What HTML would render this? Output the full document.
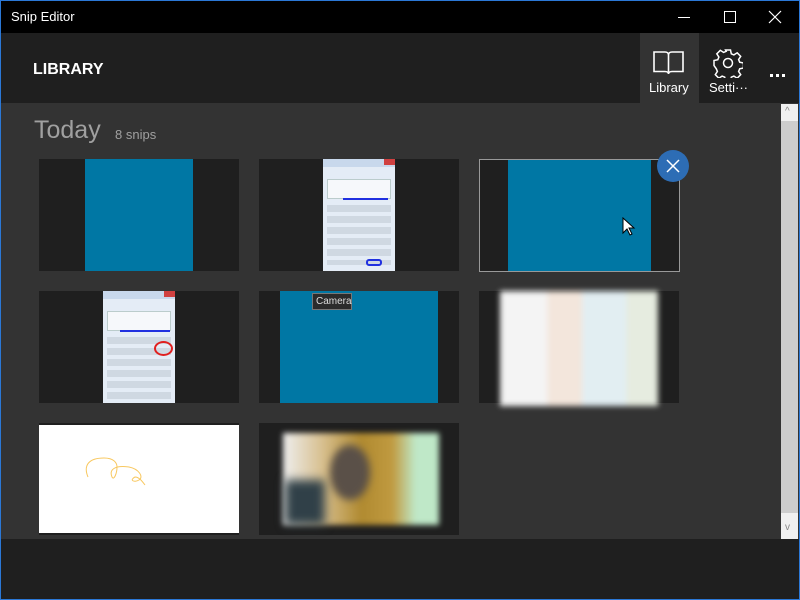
<!DOCTYPE html>
<html><head><meta charset="utf-8"><style>
*{margin:0;padding:0;box-sizing:border-box}
body{width:800px;height:600px;background:#333;position:relative;overflow:hidden;font-family:"Liberation Sans","Noto Sans CJK JP",sans-serif;color:#fff}
.a{position:absolute}
.tile{position:absolute;background:#1f1f1f}
.blue{position:absolute;background:#0077a4}
</style></head><body>
<div class="a" style="left:0;top:0;width:800px;height:600px;border:1px solid #2b78d6;z-index:50;pointer-events:none"></div>
<div class="a" style="left:0;top:0;width:800px;height:33px;background:#000"></div>
<div class="a" style="left:11px;top:9px;font-size:13px">Snip Editor</div>
<div class="a" style="left:678px;top:17px;width:12px;height:1px;background:#fff"></div>
<div class="a" style="left:724px;top:11px;width:12px;height:12px;border:1px solid #fff"></div>
<svg class="a" style="left:768px;top:10px" width="14" height="14"><path d="M1 1L13 13M13 1L1 13" stroke="#fff" stroke-width="1.2"/></svg>
<div class="a" style="left:0;top:33px;width:800px;height:70px;background:#1f1f1f"></div>
<div class="a" style="left:33px;top:61px;font-size:16px;font-weight:bold">LIBRARY</div>
<div class="a" style="left:640px;top:33px;width:59px;height:70px;background:#333"></div>
<svg class="a" style="left:653px;top:50px" width="32" height="26"><path d="M1 2h11c2 0 3.5 1 3.5 3v19c0-1.5-1.5-2.5-3.5-2.5H1zM30 2H19c-2 0-3.5 1-3.5 3v19c0-1.5 1.5-2.5 3.5-2.5h11z" fill="none" stroke="#fff" stroke-width="1.6"/></svg>
<div class="a" style="left:649px;top:80px;font-size:13px">Library</div>
<svg class="a" style="left:713px;top:48px" width="30" height="30" viewBox="0 0 30 30"><path d="M12.5 2h5l.8 3.8 2.6 1.1 3.3-2.1 3.5 3.5-2.1 3.3 1.1 2.6 3.8.8v5l-3.8.8-1.1 2.6 2.1 3.3-3.5 3.5-3.3-2.1-2.6 1.1-.8 3.8h-5l-.8-3.8-2.6-1.1-3.3 2.1-3.5-3.5 2.1-3.3-1.1-2.6L1 17.5v-5l3.8-.8 1.1-2.6-2.1-3.3 3.5-3.5 3.3 2.1 2.6-1.1z" fill="none" stroke="#fff" stroke-width="1.5"/><circle cx="15" cy="15" r="4.5" fill="none" stroke="#fff" stroke-width="1.5"/></svg>
<div class="a" style="left:709px;top:80px;font-size:13px">Setti···</div>
<div class="a" style="left:770px;top:74px;width:3px;height:3px;background:#fff"></div>
<div class="a" style="left:776px;top:74px;width:3px;height:3px;background:#fff"></div>
<div class="a" style="left:782px;top:74px;width:3px;height:3px;background:#fff"></div>
<div class="a" style="left:34px;top:116px;font-size:25px;color:#a0a0a0">Today</div>
<div class="a" style="left:115px;top:127px;font-size:13px;color:#a0a0a0">8 snips</div>
<!-- row1 -->
<div class="tile" style="left:39px;top:159px;width:200px;height:112px"></div>
<div class="blue" style="left:85px;top:159px;width:108px;height:112px"></div>
<div class="tile" style="left:259px;top:159px;width:200px;height:112px"></div>
<div class="a" style="left:323px;top:159px;width:72px;height:112px;background:#e4ecf6"></div>
<div class="a" style="left:323px;top:159px;width:72px;height:8px;background:#c8d8ec"></div>
<div class="a" style="left:384px;top:159px;width:11px;height:6px;background:#d04040"></div>
<div class="a" style="left:327px;top:179px;width:64px;height:20px;background:#f6f8fb;border:1px solid #bcc"></div>
<div class="a" style="left:343px;top:198px;width:45px;height:2px;background:#2030e0"></div>
<div class="a" style="left:327px;top:203px;width:64px;height:62px;background:repeating-linear-gradient(#e4ecf6 0 2px,#cfd8e2 2px 9px,#e4ecf6 9px 11px)"></div>
<div class="a" style="left:366px;top:259px;width:16px;height:7px;border:2px solid #2030e0;border-radius:3px"></div>
<div class="tile" style="left:479px;top:159px;width:201px;height:113px;border:1px solid #999"></div>
<div class="blue" style="left:508px;top:160px;width:143px;height:111px"></div>
<svg class="a" style="left:622px;top:217px" width="14" height="20"><path d="M1 1v15l4-4 3 6 2-1-3-6h5z" fill="#fff" stroke="#000"/></svg>
<div class="a" style="left:657px;top:150px;width:32px;height:32px;border-radius:50%;background:#2d6db5"></div>
<svg class="a" style="left:665px;top:158px" width="16" height="16"><path d="M2 2L14 14M14 2L2 14" stroke="#fff" stroke-width="1.5"/></svg>
<!-- row2 -->
<div class="tile" style="left:39px;top:291px;width:200px;height:112px"></div>
<div class="a" style="left:103px;top:291px;width:72px;height:112px;background:#e4ecf6"></div>
<div class="a" style="left:103px;top:291px;width:72px;height:8px;background:#c8d8ec"></div>
<div class="a" style="left:164px;top:291px;width:11px;height:6px;background:#d04040"></div>
<div class="a" style="left:107px;top:311px;width:64px;height:20px;background:#f6f8fb;border:1px solid #bcc"></div>
<div class="a" style="left:120px;top:330px;width:50px;height:2px;background:#2030e0"></div>
<div class="a" style="left:107px;top:335px;width:64px;height:64px;background:repeating-linear-gradient(#e4ecf6 0 2px,#cfd8e2 2px 9px,#e4ecf6 9px 11px)"></div>
<div class="a" style="left:154px;top:341px;width:19px;height:15px;border:2px solid #e02020;border-radius:50%"></div>
<div class="tile" style="left:259px;top:291px;width:200px;height:112px"></div>
<div class="blue" style="left:280px;top:291px;width:158px;height:112px"></div>
<div class="a" style="left:312px;top:293px;width:40px;height:17px;background:#2b2b2b;border:1px solid #777;font-size:10px;color:#ddd;padding:2px 0 0 3px">Camera</div>
<div class="tile" style="left:479px;top:291px;width:200px;height:112px"></div>
<div class="a" style="left:500px;top:291px;width:158px;height:115px;background:linear-gradient(90deg,#f4f4f4 0,#f4f4f4 30%,#f3e6dc 30%,#f3e6dc 52%,#e2eef2 52%,#e2eef2 80%,#e6ece0 80%);filter:blur(3px)"></div>
<!-- row3 -->
<div class="tile" style="left:39px;top:423px;width:200px;height:112px"></div>
<div class="a" style="left:39px;top:425px;width:200px;height:108px;background:#fff"></div>
<svg class="a" style="left:39px;top:425px" width="200" height="108"><path d="M49 52C44 40 50 33 65 33 75 33 78 38 78 42 78 48 75 56 73 52 70 45 75 40 90 42 100 44 105 52 100 55 95 58 90 55 96 52 100 52 103 56 106 60" fill="none" stroke="#f8c860" stroke-width="1"/></svg>
<div class="tile" style="left:259px;top:423px;width:200px;height:112px"></div>
<div class="a" style="left:283px;top:433px;width:156px;height:92px;background:linear-gradient(90deg,#eee 0,#d8c090 25%,#b08a30 50%,#c09a40 70%,#bfe8c8 85%,#bfe8c8 100%);filter:blur(3px)"></div>
<div class="a" style="left:330px;top:445px;width:40px;height:55px;border-radius:50%;background:#5a5048;filter:blur(4px)"></div>
<div class="a" style="left:285px;top:480px;width:40px;height:45px;background:#304048;filter:blur(5px)"></div>
<!-- scrollbar -->
<div class="a" style="left:781px;top:104px;width:17px;height:435px;background:#f0f0f0"></div>
<div class="a" style="left:781px;top:121px;width:17px;height:392px;background:#cdcdcd"></div>
<div class="a" style="left:785px;top:106px;font-size:10px;color:#888">^</div>
<div class="a" style="left:785px;top:522px;font-size:10px;color:#888">v</div>
<div class="a" style="left:0;top:539px;width:800px;height:61px;background:#1f1f1f"></div>
</body></html>
